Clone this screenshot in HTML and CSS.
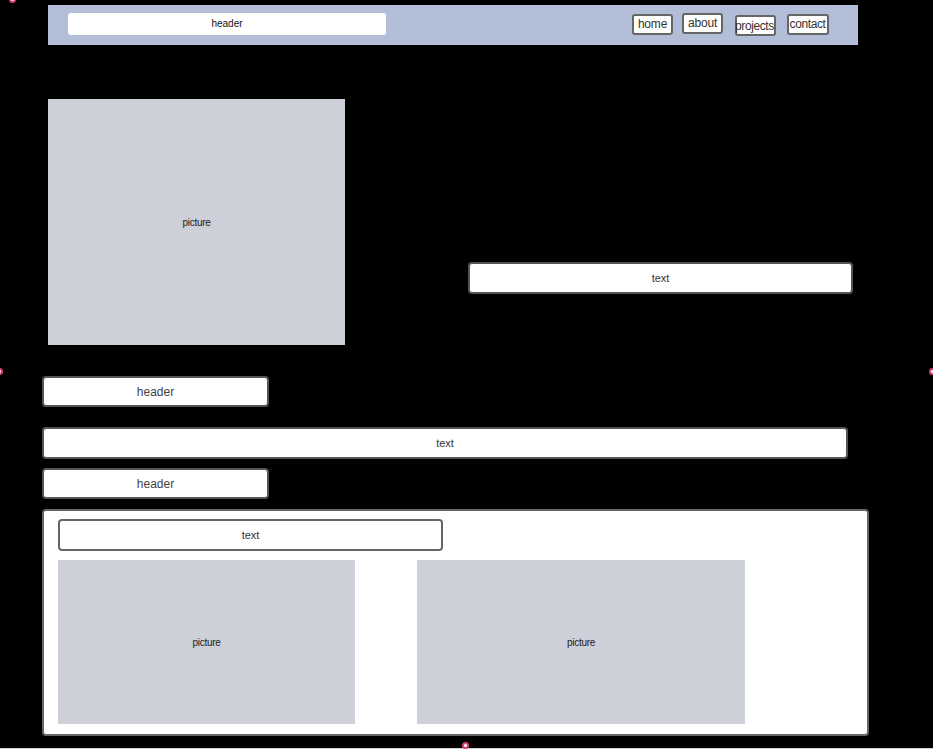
FILE: index.html
```html
<!DOCTYPE html>
<html>
<head>
<meta charset="utf-8">
<link rel="stylesheet" href="styles.css">
</head>
<body>
<div class="page">
  <div class="topbar">
    <div class="top-header">header</div>
    <nav class="nav">
      <span class="btn btn-home">home</span>
      <span class="btn btn-about">about</span>
      <span class="btn btn-projects">projects</span>
      <span class="btn btn-contact">contact</span>
    </nav>
  </div>

  <div class="hero">
    <div class="pic pic-hero">picture</div>
    <div class="box text-hero">text</div>
  </div>

  <div class="box header-box">header</div>
  <div class="box text-wide">text</div>
  <div class="box header-box header-2">header</div>

  <div class="panel">
    <div class="box text-panel">text</div>
    <div class="pics">
      <div class="pic pic-a">picture</div>
      <div class="pic pic-b">picture</div>
    </div>
  </div>
  <div class="bottom-line"></div>
</div>
<span class="handle h-left"></span>
<span class="handle h-right"></span>
<span class="handle h-bottom"></span>
<span class="handle h-top"></span>
</body>
</html>
```

FILE: styles.css
```css
* { box-sizing: border-box; }
html, body { margin: 0; padding: 0; }
body {
  background: #000;
  width: 933px;
  height: 749px;
  overflow: hidden;
  font-family: "Liberation Sans", Arial, sans-serif;
  position: relative;
}
.page {
  padding-top: 5px;
  display: flex;
  flex-direction: column;
  align-items: flex-start;
}
.topbar {
  margin-left: 48px;
  width: 810px;
  height: 40px;
  background: #b2bed8;
  display: flex;
  align-items: flex-start;
}
.top-header {
  margin-left: 20px;
  margin-top: 8px;
  width: 318px;
  height: 22px;
  background: #fff;
  border-radius: 3px;
  font-size: 10px;
  line-height: 22px;
  text-align: center;
  color: #111;
}
.nav {
  margin-left: auto;
  margin-right: 29px;
  display: flex;
  align-items: flex-start;
}
.btn {
  display: block;
  width: 41px;
  height: 21px;
  border: 2px solid #666;
  border-radius: 3px;
  background: #fff;
  font-size: 12px;
  line-height: 16px;
  text-align: center;
  color: #333;
  white-space: nowrap;
  overflow: visible;
  letter-spacing: -0.2px;
}
.btn-home { margin-top: 9px; }
.btn-about { margin-top: 8px; margin-left: 9px; }
.btn-projects { margin-top: 10px; margin-left: 12px; line-height: 18px; letter-spacing: -0.4px; text-indent: -2px; }
.btn-contact { margin-top: 9px; margin-left: 11px; width: 42px; letter-spacing: -0.4px; text-indent: -1px; }

.hero {
  margin-top: 54px;
  margin-left: 48px;
  display: flex;
  align-items: flex-start;
}
.pic {
  background: #cdd0d8;
  display: flex;
  align-items: center;
  justify-content: center;
  font-size: 10px;
  color: #222;
  letter-spacing: -0.3px;
}
.pic-hero {
  width: 297px;
  height: 246px;
  padding-top: 0;
}
.box {
  background: #fff;
  border: 2px solid #555;
  border-radius: 4px;
  display: flex;
  align-items: center;
  justify-content: center;
  font-size: 11px;
  color: #333;
}
.text-hero {
  margin-left: 123px;
  margin-top: 163px;
  width: 385px;
  height: 32px;
}
.header-box {
  margin-top: 31px;
  margin-left: 42px;
  width: 227px;
  height: 31px;
  font-size: 12px;
  color: #444;
}
.text-wide {
  margin-top: 20px;
  margin-left: 42px;
  width: 806px;
  height: 32px;
}
.header-2 {
  margin-top: 9px;
}
.panel {
  margin-top: 10px;
  margin-left: 42px;
  width: 827px;
  height: 227px;
  background: #fff;
  border: 2px solid #666;
  border-radius: 4px;
  padding: 8px 0 0 14px;
}
.text-panel {
  width: 385px;
  height: 32px;
  border-color: #666;
}
.pics {
  margin-top: 9px;
  display: flex;
}
.pic-a { width: 297px; height: 164px; }
.pic-b { width: 328px; height: 164px; margin-left: 62px; }
.bottom-line {
  margin-top: 12px;
  width: 933px;
  height: 2px;
  background: #d0d2d6;
}
.handle {
  position: absolute;
  width: 7px;
  height: 7px;
  border-radius: 50%;
  background: #fff;
  border: 2px solid #d8406a;
}
.h-left { left: -4px; top: 368px; }
.h-right { left: 929px; top: 368px; }
.h-bottom { left: 462px; top: 742px; }
.h-top { left: 9px; top: -4px; }
```
